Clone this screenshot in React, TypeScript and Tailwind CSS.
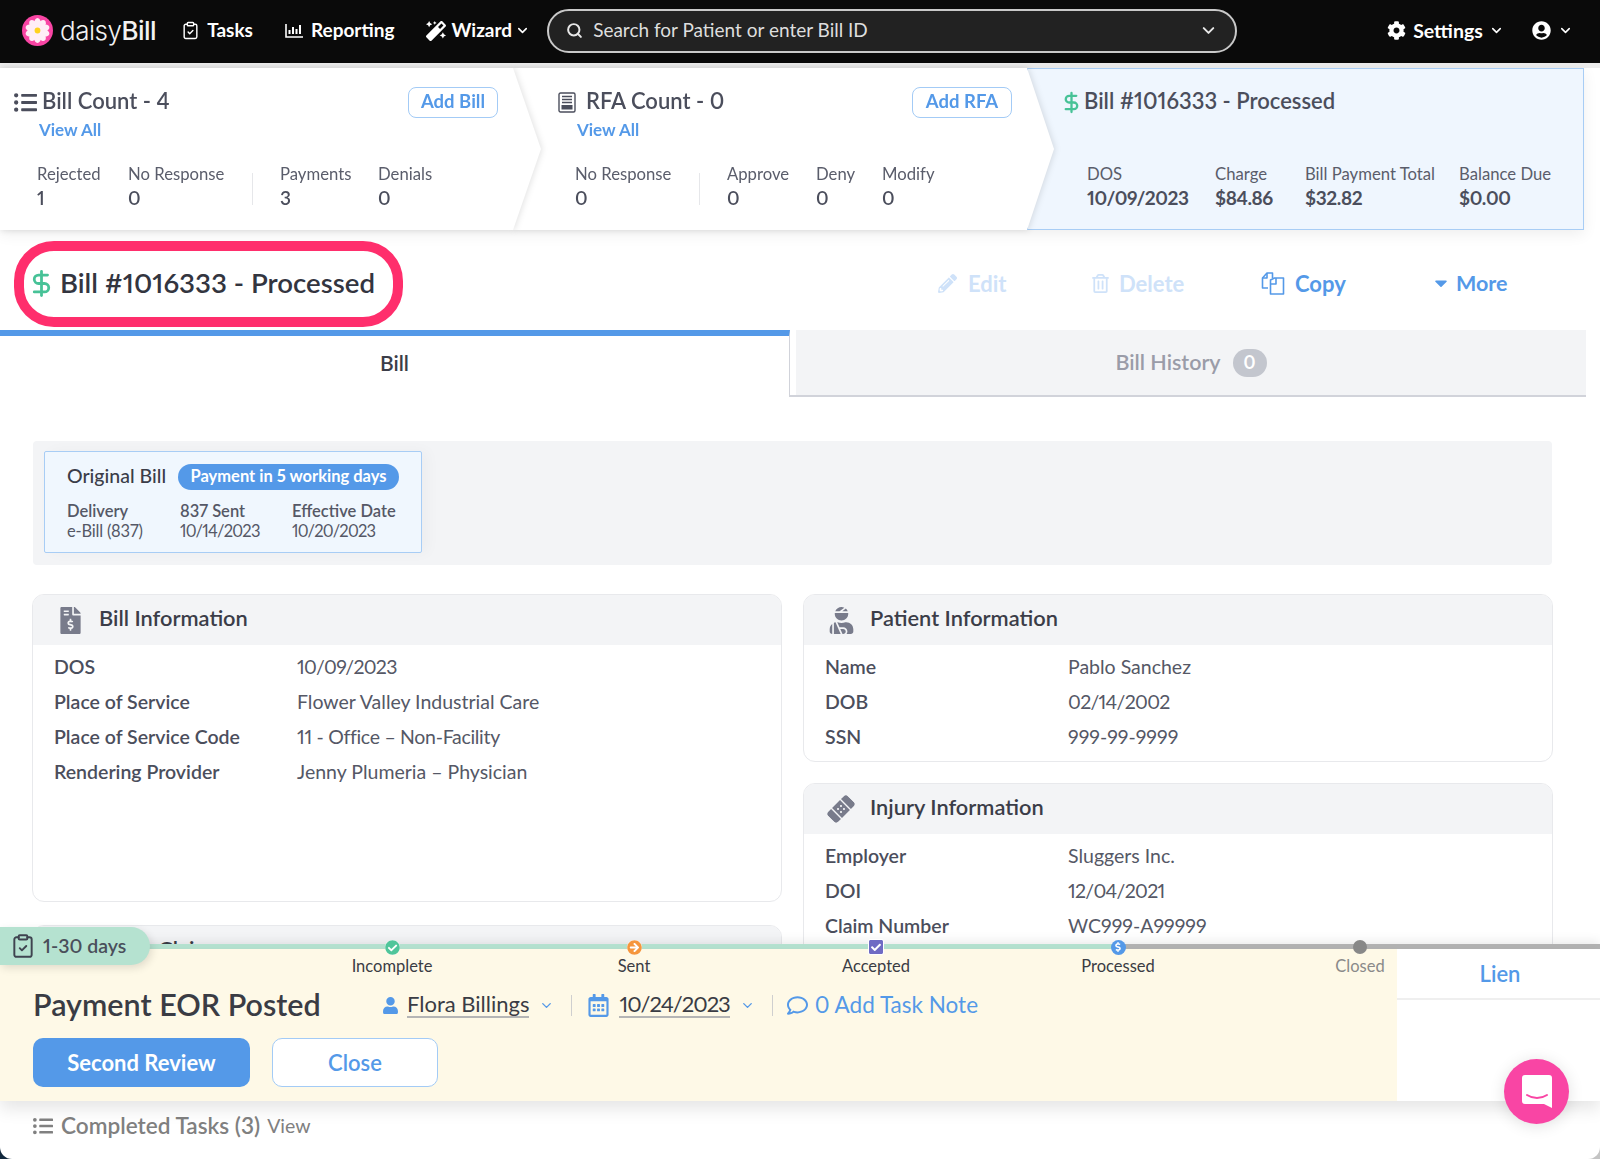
import React from "react";
import { ChevronDown, ClipboardCheck, DollarSign, Search } from "lucide-react";
import {
  FaArrowCircleRight, FaBandAid, FaCaretDown, FaCheckCircle, FaCheckSquare, FaCog, FaDollarSign,
  FaFileInvoiceDollar, FaListUl, FaMagic, FaPencilAlt, FaRegCalendarAlt, FaRegComment, FaRegTrashAlt,
  FaUser, FaUserCircle, FaUserInjured,
} from "react-icons/fa";

function Logo() {
  const angles = [0, 36, 72, 108, 144, 180, 216, 252, 288, 324];
  return (
    <svg width="31" height="31" viewBox="0 0 32 32" className="shrink-0">
      <circle cx="16" cy="16" r="16" fill="#f945a4" />
      {angles.map((a) => (
        <ellipse key={a} cx="16" cy="8.8" rx="3.6" ry="5.6" fill="#ffeef6" transform={`rotate(${a} 16 16)`} />
      ))}
      <circle cx="16" cy="16" r="3" fill="#ffd21f" />
    </svg>
  );
}

function ReportIcon() {
  return (
    <svg width="19" height="16" viewBox="0 0 19 16" fill="none" stroke="#fff" strokeWidth="2">
      <path d="M1 1v13h17" strokeWidth="1.6" />
      <path d="M4.5 11V7M8 11V4M11.5 11V6M15 11V2" />
    </svg>
  );
}

function RfaIcon() {
  return (
    <svg width="18" height="21" viewBox="0 0 18 21" fill="none" stroke="#4b4e5c" strokeWidth="1.4">
      <rect x="1" y="1" width="16" height="19" rx="1.5" />
      <path d="M4 4.5h10M4 7.5h10M4 10.5h10" />
      <rect x="3.5" y="13" width="11" height="4.5" fill="#4b4e5c" stroke="none" />
    </svg>
  );
}

function CopyIcon() {
  return (
    <svg width="24" height="23" viewBox="0 0 24 23" fill="none" stroke="#5499e8" strokeWidth="1.6" strokeLinejoin="round">
      <path d="M7 16H1.5V6L6 1h5.5v5" />
      <path d="M6 1v5H1.5" />
      <path d="M9.5 22V8l4-2h9v16z" fill="#fff" />
      <path d="M15 6v6h-5.5" />
    </svg>
  );
}

function Stat({ label, value, width, strong }: { label: string; value: string; width: string; strong?: boolean }) {
  return (
    <div className={`flex flex-col ${width}`}>
      <span className="text-[16.7px] leading-[24px] text-[#5a5d6b]">{label}</span>
      <span className={`-mt-[1px] text-[19px] leading-[26px] text-[#4b4e5c] ${strong ? "font-bold tracking-[-0.4px]" : "font-semibold"}`}>{value}</span>
    </div>
  );
}

function OutlineBtn({ children, width }: { children: React.ReactNode; width: string }) {
  return (
    <button className={`h-[31px] ${width} rounded-[8px] border border-[#a3cbf6] bg-white pb-[2px] text-[18.5px] font-bold text-[#5499e8]`}>
      {children}
    </button>
  );
}

function StatDivider() {
  return <div className="mr-[27px] mt-[11px] h-[32px] w-px bg-[#e6e7ea]" />;
}

function InfoCard({ icon, title, rows, className }: { icon: React.ReactNode; title: string; rows: [string, string][]; className?: string }) {
  return (
    <section className={`overflow-hidden rounded-[12px] border border-[#e8e9ec] bg-white ${className ?? ""}`}>
      <header className="flex h-[50px] items-center bg-[#f3f4f6]">
        <span className="flex w-[66px] justify-center pl-[8px] text-[#787b8b]">{icon}</span>
        <h2 className="pb-[3px] text-[21.8px] font-semibold text-[#3b3d48]">{title}</h2>
      </header>
      <dl className="pb-[5px] pl-[21px] pt-[6px]">
        {rows.map(([k, v]) => (
          <div key={k} className="flex h-[35px] items-center pb-[4px] text-[19.5px]">
            <dt className="w-[243px] font-semibold text-[#4b4e5c]">{k}</dt>
            <dd className={`text-[#555866] ${v.includes("/") ? "tracking-[-0.7px]" : v.startsWith("11") ? "tracking-[-0.3px]" : ""}`}>{v}</dd>
          </div>
        ))}
      </dl>
    </section>
  );
}

function Step({ marker, label, muted }: { marker: React.ReactNode; label: string; muted?: boolean }) {
  return (
    <div className="flex w-[242px] shrink-0 flex-col items-center">
      <div className="relative z-10 -mt-[10px] flex h-[16px] w-[16px] items-center justify-center rounded-full">{marker}</div>
      <span className={`mt-[1px] text-[16.5px] leading-[20px] ${muted ? "text-[#8a8a8a]" : "text-[#3a3c44]"}`}>{label}</span>
    </div>
  );
}

export default function App() {
  return (
    <div className="relative h-[1159px] w-[1600px] overflow-hidden bg-white font-['Lato','Open_Sans',sans-serif] proportional-nums">
      {/* top nav */}
      <nav className="flex h-[63px] items-center bg-[#0a0a0a] pb-[2px] pl-[22px] text-[19px] font-bold text-white">
        <Logo />
        <span className="ml-[7px] font-['Inter',sans-serif] text-[26px] font-light tracking-[-0.5px] text-[#f2f2f2]">
          daisy<span className="font-medium">Bill</span>
        </span>
        <ClipboardCheck className="ml-[25px]" size={19} strokeWidth={1.8} />
        <span className="ml-[7px]">Tasks</span>
        <span className="ml-[32px]"><ReportIcon /></span>
        <span className="ml-[7px]">Reporting</span>
        <FaMagic className="ml-[32px]" size={20} />
        <span className="ml-[5px]">Wizard</span>
        <ChevronDown className="ml-[3px]" size={15} strokeWidth={2.5} />
        <div className="ml-[17px] flex h-[44px] w-[690px] items-center rounded-full border-2 border-[#c9c9c9] bg-[#222222] pl-[17px] pr-[17px]">
          <Search size={17} strokeWidth={2.8} className="text-[#e8e8e8]" />
          <span className="ml-[10px] flex-1 text-[19px] font-normal text-[#dedede]">Search for Patient or enter Bill ID</span>
          <ChevronDown size={19} strokeWidth={2.5} className="text-[#e8e8e8]" />
        </div>
        <FaCog className="ml-[150px]" size={19} />
        <span className="ml-[7px] text-[19.5px]">Settings</span>
        <ChevronDown className="ml-[6px]" size={15} strokeWidth={2.5} />
        <FaUserCircle className="ml-[28px]" size={19} />
        <ChevronDown className="ml-[7px]" size={15} strokeWidth={2.5} />
      </nav>

      {/* breadcrumb strip */}
      <div className="h-[5px] bg-[#ececec]" />
      <div className="flex h-[162px] w-[1584px] shadow-[0_4px_14px_rgba(0,0,0,0.07)]">
        <div className="relative z-20 h-full w-[541px] shrink-0 drop-shadow-[1px_0_3px_rgba(0,0,0,0.12)]">
          <div className="h-full bg-white pl-[14px] pt-[19px] [clip-path:polygon(0_0,513px_0,541px_50%,513px_100%,0_100%)]">
            <div className="flex h-[31px] items-center pr-[43px]">
              <FaListUl size={23} className="mb-[1px] text-[#4b4e5c]" />
              <span className="ml-[5px] flex-1 pb-[3px] text-[22px] font-semibold leading-[26px] text-[#4b4e5c]">Bill Count - 4</span>
              <OutlineBtn width="w-[90px]">Add Bill</OutlineBtn>
            </div>
            <div className="pl-[25px] text-[17px] font-bold leading-[24px] text-[#5499e8]">View All</div>
            <div className="mt-[20px] flex pl-[23px]">
              <Stat label="Rejected" value="1" width="w-[91px]" />
              <Stat label="No Response" value="0" width="w-[124px]" />
              <StatDivider />
              <Stat label="Payments" value="3" width="w-[98px]" />
              <Stat label="Denials" value="0" width="w-[80px]" />
            </div>
          </div>
        </div>
        <div className="relative z-10 -ml-[28px] h-full w-[541px] shrink-0 drop-shadow-[1px_0_3px_rgba(0,0,0,0.12)]">
          <div className="h-full bg-white pl-[45px] pt-[19px] [clip-path:polygon(0_0,514px_0,541px_50%,514px_100%,0_100%)]">
            <div className="flex h-[31px] items-center pr-[42px]">
              <RfaIcon />
              <span className="ml-[10px] flex-1 pb-[3px] text-[22px] font-semibold leading-[26px] text-[#4b4e5c]">RFA Count - 0</span>
              <OutlineBtn width="w-[100px]">Add RFA</OutlineBtn>
            </div>
            <div className="pl-[19px] text-[17px] font-bold leading-[24px] text-[#5499e8]">View All</div>
            <div className="mt-[20px] flex pl-[17px]">
              <Stat label="No Response" value="0" width="w-[124px]" />
              <StatDivider />
              <Stat label="Approve" value="0" width="w-[89px]" />
              <Stat label="Deny" value="0" width="w-[66px]" />
              <Stat label="Modify" value="0" width="w-[80px]" />
            </div>
          </div>
        </div>
        <div className="-ml-[27px] h-full flex-1 border border-[#a8cdf5] bg-[#eff6fe] pl-[32px] pt-[18px]">
          <div className="flex h-[31px] items-center">
            <DollarSign size={23} strokeWidth={2.4} className="text-[#47c297]" />
            <span className="ml-[1px] pb-[4px] text-[22px] font-semibold text-[#4b4e5c]">Bill #1016333 - Processed</span>
          </div>
          <div className="mt-[44px] flex pl-[27px]">
            <Stat label="DOS" value="10/09/2023" width="w-[128px]" strong />
            <Stat label="Charge" value="$84.86" width="w-[90px]" strong />
            <Stat label="Bill Payment Total" value="$32.82" width="w-[154px]" strong />
            <Stat label="Balance Due" value="$0.00" width="w-[110px]" strong />
          </div>
        </div>
      </div>

      {/* title */}
      <div className="relative flex h-[100px] w-[1586px] items-center pl-[27px] pt-[6px]">
        <DollarSign size={29} strokeWidth={2.3} className="text-[#47c297]" />
        <h1 className="ml-[4px] text-[27.6px] font-semibold text-[#33353f]">Bill #1016333 - Processed</h1>
        <div className="absolute left-[14px] top-[11px] h-[86px] w-[389px] rounded-[40px] border-[10px] border-[#ff2e6c]" />
        <div className="ml-auto flex w-[648px] text-[22px] font-bold">
          <div className="flex w-[153px] items-center text-[#cfe2f9]"><FaPencilAlt size={19} /><span className="ml-[11px]">Edit</span></div>
          <div className="flex w-[170px] items-center text-[#cfe2f9]"><FaRegTrashAlt size={19} /><span className="ml-[9px]">Delete</span></div>
          <div className="flex w-[170px] items-center text-[#5499e8]"><CopyIcon /><span className="ml-[10px]">Copy</span></div>
          <div className="flex items-center text-[#5499e8]"><FaCaretDown size={20} /><span className="ml-[5px] text-[21.5px]">More</span></div>
        </div>
      </div>

      {/* tabs */}
      <div className="flex h-[67px] w-[1586px]">
        <div className="flex w-[790px] items-center justify-center border-r border-t-[6px] border-r-[#d1d3da] border-t-[#5499e8] pb-[8px] text-[21px] font-semibold text-[#3b3d48]">Bill</div>
        <div className="w-[6px] border-b-2 border-[#d1d3da]" />
        <div className="flex flex-1 items-center justify-center border-b-2 border-[#d1d3da] bg-[#f3f4f6] text-[21.5px] font-semibold text-[#9a9ca8]">
          Bill History
          <span className="ml-[12px] flex h-[28px] w-[34px] items-center justify-center rounded-full bg-[#c3c6ce] text-[18px] font-bold text-white">0</span>
        </div>
      </div>

      {/* original bill */}
      <div className="ml-[33px] mt-[44px] h-[124px] w-[1519px] rounded-[4px] bg-[#f3f4f6] pl-[11px] pt-[10px]">
        <div className="h-[102px] w-[378px] rounded-[2px] border border-[#a8cdf5] bg-[#f0f7fe] pl-[22px] pt-[12px] shadow-[6px_0_14px_rgba(0,0,0,0.03)]">
          <div className="flex h-[26px] items-center">
            <span className="w-[111px] pb-[2px] text-[19.5px] font-medium text-[#3b3d48]">Original Bill</span>
            <span className="flex h-[26px] w-[221px] items-center justify-center rounded-full bg-[#5499e8] pb-[1px] text-[16.5px] font-bold text-white">Payment in 5 working days</span>
          </div>
          <div className="mt-[11px] flex text-[16.5px] leading-[20px] text-[#555866]">
            <div className="flex w-[113px] flex-col"><span className="font-semibold">Delivery</span><span className="tracking-[-0.2px]">e-Bill (837)</span></div>
            <div className="flex w-[112px] flex-col"><span className="font-semibold">837 Sent</span><span className="tracking-[-0.8px]">10/14/2023</span></div>
            <div className="flex flex-col"><span className="font-semibold">Effective Date</span><span className="tracking-[-0.8px]">10/20/2023</span></div>
          </div>
        </div>
      </div>

      {/* info cards */}
      <div className="ml-[32px] mt-[29px] grid w-[1522px] grid-cols-[750px_750px] gap-x-[21px]">
        <div className="flex flex-col gap-[23px]">
          <InfoCard
            className="h-[308px]"
            icon={<FaFileInvoiceDollar size={27} />}
            title="Bill Information"
            rows={[
              ["DOS", "10/09/2023"],
              ["Place of Service", "Flower Valley Industrial Care"],
              ["Place of Service Code", "11 - Office – Non-Facility"],
              ["Rendering Provider", "Jenny Plumeria – Physician"],
            ]}
          />
          <InfoCard icon={<FaFileInvoiceDollar size={27} />} title="Payer Claims" rows={[]} className="h-[120px]" />
        </div>
        <div className="flex flex-col gap-[21px]">
          <InfoCard
            icon={<FaUserInjured size={27} />}
            title="Patient Information"
            rows={[
              ["Name", "Pablo Sanchez"],
              ["DOB", "02/14/2002"],
              ["SSN", "999-99-9999"],
            ]}
          />
          <InfoCard
            className="h-[280px]"
            icon={<FaBandAid size={28} className="-rotate-45" />}
            title="Injury Information"
            rows={[
              ["Employer", "Sluggers Inc."],
              ["DOI", "12/04/2021"],
              ["Claim Number", "WC999-A99999"],
            ]}
          />
        </div>
      </div>

      {/* bottom task bar overlay */}
      <div className="absolute inset-x-0 bottom-0 top-[944px] z-10 flex flex-col shadow-[0_-3px_10px_rgba(0,0,0,0.08)]">
        <div className="flex h-[5px] shrink-0">
          <div className="w-[1119px] bg-[#b5e2d0]" />
          <div className="flex-1 bg-[#b3b3b3]" />
        </div>
        <div className="relative z-10 flex h-[152px] shrink-0 shadow-[0_8px_16px_rgba(0,0,0,0.1)]">
          <div className="w-[1397px] shrink-0 bg-[#fef9e7]">
            <div className="flex pl-[271px]">
              <Step label="Incomplete" marker={<span className="rounded-full bg-white"><FaCheckCircle size={15} className="text-[#4fc59a]" /></span>} />
              <Step label="Sent" marker={<span className="rounded-full bg-white"><FaArrowCircleRight size={15} className="text-[#f5963d]" /></span>} />
              <Step label="Accepted" marker={<span className="rounded-[3px] bg-white"><FaCheckSquare size={16} className="text-[#6f6bc4]" /></span>} />
              <Step label="Processed" marker={<span className="flex h-[15px] w-[15px] items-center justify-center rounded-full bg-[#5499e8]"><FaDollarSign size={10} className="text-white" /></span>} />
              <Step label="Closed" muted marker={<span className="h-[14px] w-[14px] rounded-full bg-[#888888]" />} />
            </div>
            <div className="mt-[9px] flex h-[40px] items-center pl-[33px]">
              <h2 className="w-[349px] pb-[1px] text-[30.5px] font-semibold text-[#3a3c44]">Payment EOR Posted</h2>
              <FaUser size={17} className="text-[#5499e8]" />
              <span className="ml-[8px] border-b-2 border-[#b5b5b5] text-[22px] leading-[24px] text-[#3a3c44]">Flora Billings</span>
              <ChevronDown size={15} strokeWidth={2.2} className="ml-[10px] text-[#5499e8]" />
              <div className="ml-[17px] h-[21px] w-px bg-[#cfcfcf]" />
              <FaRegCalendarAlt size={23} className="ml-[15px] text-[#5499e8]" />
              <span className="ml-[9px] border-b-2 border-[#b5b5b5] text-[22px] leading-[24px] tracking-[-1px] text-[#3a3c44]">10/24/2023</span>
              <ChevronDown size={15} strokeWidth={2.2} className="ml-[10px] text-[#5499e8]" />
              <div className="ml-[17px] h-[21px] w-px bg-[#cfcfcf]" />
              <FaRegComment size={21} className="ml-[14px] text-[#5499e8]" />
              <span className="ml-[7px] text-[22.5px] text-[#5499e8]">0 Add Task Note</span>
            </div>
            <div className="mt-[13px] flex gap-[22px] pl-[33px]">
              <button className="h-[49px] w-[217px] rounded-[10px] bg-[#5499e8] pb-[1px] text-[22px] font-bold text-white">Second Review</button>
              <button className="h-[49px] w-[166px] rounded-[10px] border border-[#a3cbf6] bg-white pb-[1px] text-[22px] font-semibold text-[#5499e8]">Close</button>
            </div>
          </div>
          <div className="flex-1 bg-white">
            <div className="flex h-[51px] items-center justify-center border-b-2 border-[#efefef] pl-[3px] text-[22px] font-semibold text-[#5499e8]">Lien</div>
          </div>
        </div>
        <div className="flex flex-1 items-start bg-white pl-[33px] pt-[11px] text-[#808080]">
          <div className="flex h-[28px] items-center">
            <FaListUl size={20} />
            <span className="ml-[8px] text-[22.6px] font-semibold">Completed Tasks (3)</span>
            <span className="ml-[7px] text-[19.5px]">View</span>
          </div>
        </div>
      </div>

      {/* days badge */}
      <div className="absolute left-0 top-[927px] z-20 flex h-[38px] w-[150px] items-center rounded-r-[22px] bg-[#b5e2d0] pl-[10px] shadow-[2px_3px_8px_rgba(0,0,0,0.12)]">
        <ClipboardCheck size={26} strokeWidth={1.8} className="text-[#3f4450]" />
        <span className="ml-[7px] pb-[1px] text-[19.5px] font-semibold text-[#4a4f5b]">1-30 days</span>
      </div>

      {/* chat bubble */}
      <button className="absolute bottom-[35px] right-[31px] z-20 flex h-[65px] w-[65px] items-center justify-center rounded-full bg-[#f945a4] shadow-[0_2px_16px_rgba(0,0,0,0.12)]">
        <svg width="30" height="33" viewBox="0 0 30 33">
          <path d="M3 0h24a3 3 0 0 1 3 3v30l-8-4H3a3 3 0 0 1-3-3V3a3 3 0 0 1 3-3z" fill="#fff" />
          <path d="M5 20c6 4 14 4 20 0" fill="none" stroke="#f945a4" strokeWidth="2" strokeLinecap="round" />
        </svg>
      </button>

      {/* window corners */}
      <div className="absolute bottom-0 left-0 z-20 h-[12px] w-[12px] bg-[#12293d]"><div className="h-full w-full rounded-bl-[12px] bg-white" /></div>
      <div className="absolute bottom-0 right-0 z-20 h-[12px] w-[12px] bg-[#c4c4c4]"><div className="h-full w-full rounded-br-[12px] bg-white" /></div>
    </div>
  );
}
